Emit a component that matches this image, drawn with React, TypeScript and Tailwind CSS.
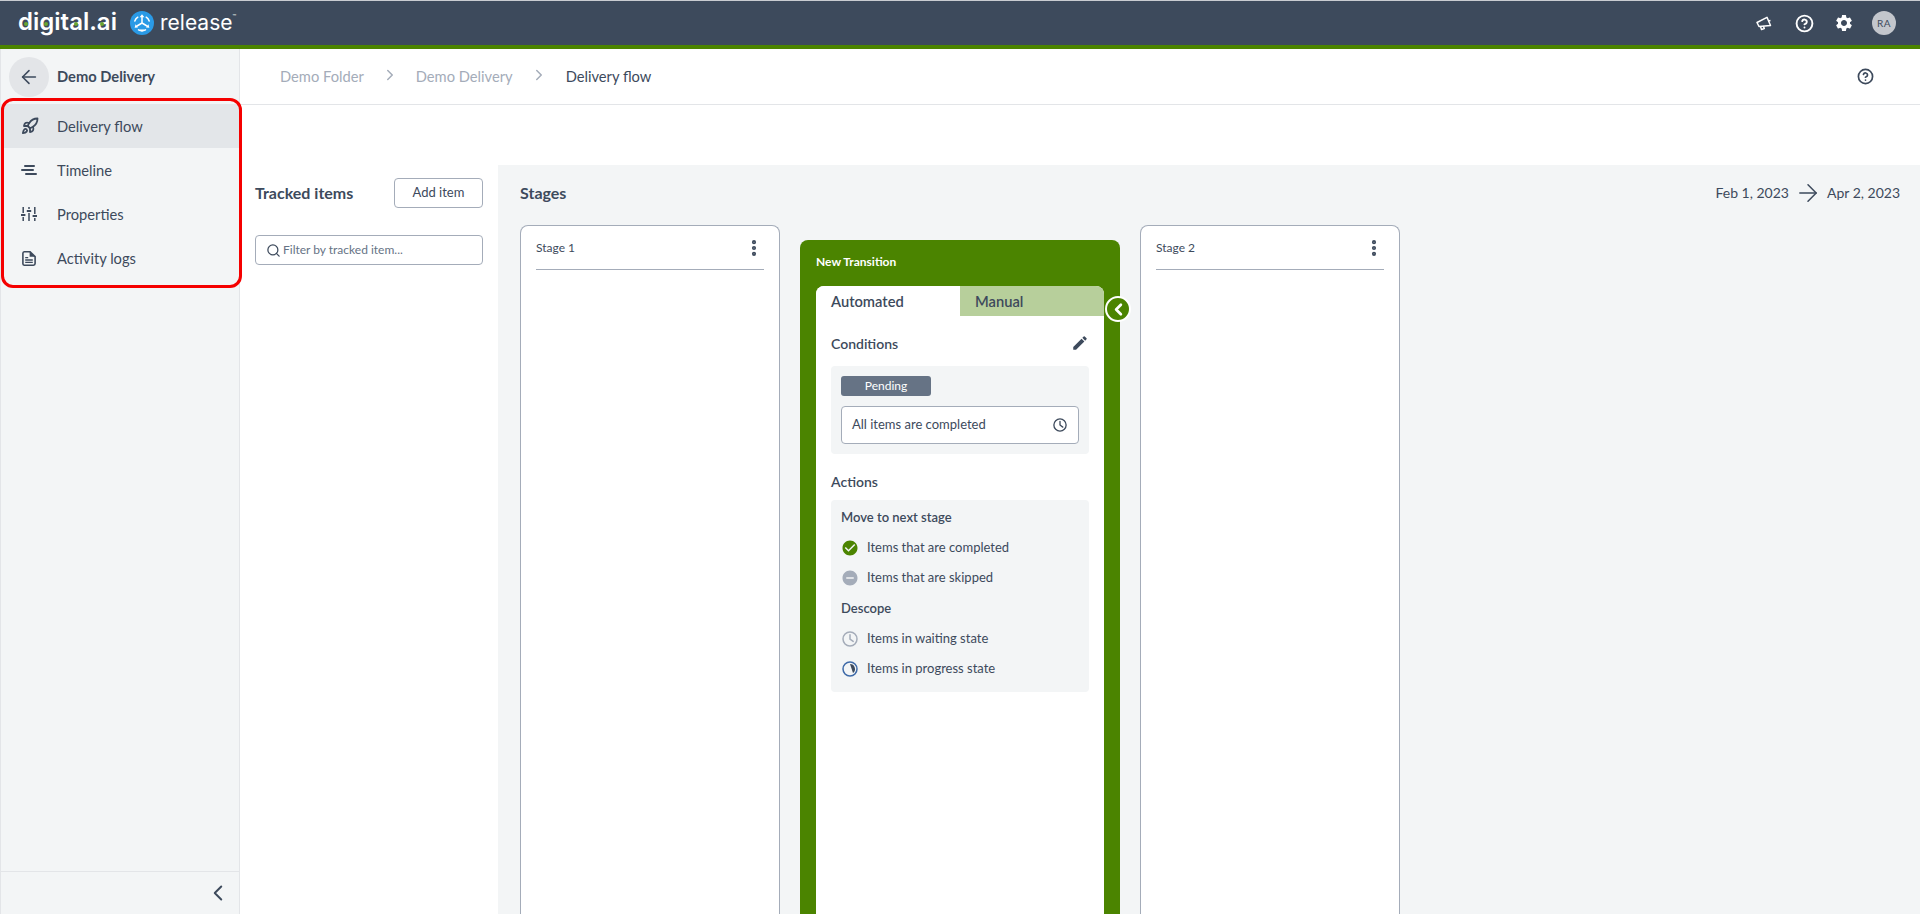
import { ArrowLeft, ArrowRight, ChevronLeft, ChevronRight, CircleHelp, EllipsisVertical, Rocket, Search } from 'lucide-react'
import { MdEdit, MdCheckCircle, MdRemoveCircle, MdSettings } from 'react-icons/md'

const font = { fontFamily: 'Lato, "Open Sans", sans-serif' }
const logoFont = { fontFamily: 'Inter, "Open Sans", sans-serif' }

function ReleaseLogo() {
    return (
        <svg width="24" height="24" viewBox="0 0 24 24">
            <circle cx="12" cy="12" r="12" fill="#2a9ae6" />
            <g fill="none" stroke="#fff" strokeWidth="1.5" strokeLinecap="round">
                <path d="M12 6v6M12 12l-5 3M12 12l5 3" />
                <path d="M4.8 10a7.5 7.5 0 0 1 3-3.8M19.2 10a7.5 7.5 0 0 0-3-3.8M8.5 18.8a7.5 7.5 0 0 0 7 0" />
            </g>
            <path d="M12 3.2l2.4 3h-4.8zM4.6 16.8l1-3.6 2.4 3.2zM19.4 16.8l-1-3.6-2.4 3.2zM12 21l-2-2.4h4z" fill="#fff" />
        </svg>
    )
}

function TimelineIcon() {
    return (
        <svg width="16" height="10" viewBox="0 0 16 10" fill="#3d4a5c">
            <rect x="3" y="0" width="11" height="2" rx="1" />
            <rect x="0" y="4" width="13" height="2" rx="1" />
            <rect x="4" y="8" width="12" height="2" rx="1" />
        </svg>
    )
}

function SlidersIcon() {
    return (
        <svg width="16" height="14" viewBox="0 0 16 14" fill="none" stroke="#3d4a5c" strokeWidth="1.5">
            <path d="M2.2 0v6M2.2 10v4M8 0v2M8 6v8M13.8 0v7M13.8 11v3" />
            <path d="M0 8h4.4M5.8 4h4.4M11.6 9h4.4" strokeWidth="2" />
        </svg>
    )
}

function DocIcon() {
    return (
        <svg width="14" height="15" viewBox="0 0 14 15">
            <path d="M2.2.8h5.9l5 4.8v7a1.6 1.6 0 0 1-1.6 1.6H2.2A1.6 1.6 0 0 1 .9 12.6V2.2A1.5 1.5 0 0 1 2.2.8z" fill="none" stroke="#3d4a5c" strokeWidth="1.6" />
            <path d="M7.6 1v4.8h5.4z" fill="#3d4a5c" />
            <path d="M3.2 6.6h3M3.2 9h7.6M3.2 11.4h7.6" stroke="#3d4a5c" strokeWidth="1.4" />
        </svg>
    )
}

function MegaphoneIcon() {
    return (
        <svg width="16" height="15" viewBox="0 0 16 15" fill="none" stroke="#fff" strokeWidth="1.5" strokeLinejoin="round">
            <path d="M1 6.5l10-5.2 3.5 8.2L3 10.5z" />
            <path d="M4.5 10.5l1 3 2.8-1-1-2.6" />
            <path d="M12 5l2.5-.5" />
        </svg>
    )
}

function ClockIcon({ color, size = 14 }: { color: string; size?: number }) {
    return (
        <svg width={size} height={size} viewBox="0 0 16 16" fill="none" stroke={color} strokeWidth="1.5">
            <circle cx="8" cy="8" r="7" />
            <path d="M8 3.8V8l3.2 2.4" strokeLinecap="round" />
        </svg>
    )
}

function ProgressIcon() {
    return (
        <svg width="16" height="16" viewBox="0 0 16 16">
            <circle cx="8" cy="8" r="7" fill="none" stroke="#3e6aa8" strokeWidth="1.5" />
            <path d="M8 3a5 5 0 0 1 3 9z" fill="#3d4a5c" />
        </svg>
    )
}

const NAV_ITEMS = [
    { label: 'Delivery flow', icon: <Rocket className="w-[18px] h-[18px] text-[#3d4a5c]" strokeWidth={2.4} />, active: true },
    { label: 'Timeline', icon: <TimelineIcon />, active: false },
    { label: 'Properties', icon: <SlidersIcon />, active: false },
    { label: 'Activity logs', icon: <span className="ml-[1px] flex"><DocIcon /></span>, active: false },
]

const LOGO_DOTS = ['left-[6px]', 'left-[26px]', 'left-[56px]', 'left-[82px]']

function StageCard({ title }: { title: string }) {
    return (
        <div className="w-[260px] shrink-0 bg-white border border-[#a4acb9] border-b-0 rounded-t-lg px-[15px] mt-[1px]">
            <div className="h-[44px] flex items-center justify-between border-b border-[#a4acb9]">
                <span className="text-[12px] text-[#3d4a5c]">{title}</span>
                <EllipsisVertical className="w-[20px] h-[20px] text-[#3d4a5c]" strokeWidth={3} />
            </div>
        </div>
    )
}

function ActionRow({ icon, text }: { icon: React.ReactNode; text: string }) {
    return (
        <div className="h-[30px] flex items-center">
            <span className="w-[16px] h-[16px] flex items-center justify-center ml-[1px] mr-[9px]">{icon}</span>
            <span className="text-[13px] text-[#3d4a5c]">{text}</span>
        </div>
    )
}

export default function App() {
    return (
        <div className="relative h-screen flex flex-col overflow-hidden bg-white" style={font}>
            <header className="h-[49px] shrink-0 flex items-center justify-between bg-[#3d4a5c] border-t border-[#c9ccd1] border-b-[4px] border-b-[#4b8400] pl-[18px] pr-[24px]">
                <div className="flex items-center" style={logoFont}>
                    <span className="relative w-[112px] -mt-[3px] text-[24px] leading-none text-white font-semibold">
                        digital.ai
                        {LOGO_DOTS.map((pos) => (
                            <span key={pos} className={`absolute ${pos} top-[12px] w-[4px] h-[4px] rounded-full bg-[#6aa52f]`} />
                        ))}
                    </span>
                    <ReleaseLogo />
                    <span className="ml-[6px] text-[21px] leading-none text-white -mt-[2px]">release</span>
                    <span className="text-[6px] leading-none text-white self-start mt-[3px]">™</span>
                </div>
                <div className="flex items-center">
                    <span className="w-[40px] flex justify-center"><MegaphoneIcon /></span>
                    <span className="w-[40px] flex justify-center"><CircleHelp className="w-[19px] h-[19px] text-white" strokeWidth={2.4} /></span>
                    <span className="w-[40px] flex justify-center"><MdSettings className="w-[20px] h-[20px] text-white" /></span>
                    <div className="w-[24px] h-[24px] rounded-full bg-[#c3c6cc] ml-[8px] flex items-center justify-center text-[10px] tracking-[0.5px] text-[#3d4a5c]">RA</div>
                </div>
            </header>

            <div className="flex-1 flex min-h-0">
                <aside className="w-[240px] shrink-0 flex flex-col bg-[#f3f5f6] border-x border-[#e3e5e8]">
                    <div className="h-[55px] flex items-center pl-[8px]">
                        <div className="w-[40px] h-[40px] rounded-full bg-[#e3e5e8] flex items-center justify-center">
                            <ArrowLeft className="w-[22px] h-[22px] text-[#3d4a5c]" strokeWidth={1.7} />
                        </div>
                        <span className="ml-[8px] text-[14.7px] font-bold text-[#3d4a5c]">Demo Delivery</span>
                    </div>
                    <nav className="flex flex-col">
                        {NAV_ITEMS.map((item) => (
                            <div key={item.label} className={`h-[44px] flex items-center ${item.active ? 'bg-[#e3e6e9]' : ''}`}>
                                <span className="w-[56px] pl-[20px] flex items-center">{item.icon}</span>
                                <span className="text-[14.7px] text-[#3d4a5c]">{item.label}</span>
                            </div>
                        ))}
                    </nav>
                    <div className="mt-auto h-[43px] border-t border-[#e3e5e8] flex items-center justify-end pr-[8px]">
                        <ChevronLeft className="w-[26px] h-[26px] text-[#3d4a5c]" strokeWidth={1.8} />
                    </div>
                </aside>

                <main className="flex-1 min-w-0 flex flex-col">
                    <div className="h-[56px] shrink-0 flex items-center justify-between border-b border-[#e3e5e8] pl-[40px] pr-[46px] text-[14.7px]">
                        <div className="flex items-center">
                            <span className="text-[#a4acb9]">Demo Folder</span>
                            <ChevronRight className="w-[18px] h-[18px] text-[#a4acb9] ml-[17px] mr-[17px] -mt-[2px]" />
                            <span className="text-[#a4acb9]">Demo Delivery</span>
                            <ChevronRight className="w-[18px] h-[18px] text-[#a4acb9] ml-[17px] mr-[18px] -mt-[2px]" />
                            <span className="text-[#3d4a5c]">Delivery flow</span>
                        </div>
                        <CircleHelp className="w-[17px] h-[17px] text-[#3d4a5c]" strokeWidth={2.4} />
                    </div>

                    <div className="flex-1 min-h-0 flex mt-[60px]">
                        <section className="w-[258px] shrink-0 px-[15px] pt-[13px]">
                            <div className="flex items-center justify-between">
                                <span className="text-[16px] font-bold text-[#3d4a5c]">Tracked items</span>
                                <button className="w-[89px] h-[30px] border border-[#a4acb9] rounded text-[13px] text-[#3d4a5c]">Add item</button>
                            </div>
                            <div className="mt-[27px] h-[30px] border border-[#a4acb9] rounded flex items-center pl-[10px] text-[12px] text-[#667385]">
                                <Search className="w-[15px] h-[15px] text-[#3d4a5c] mr-[2px]" strokeWidth={2} />
                                Filter by tracked item...
                            </div>
                        </section>

                        <section className="flex-1 min-w-0 flex flex-col bg-[#f3f5f6] pl-[22px] pr-[20px]">
                            <div className="h-[59px] shrink-0 pt-[14px] flex justify-between items-start">
                                <span className="text-[16px] font-bold text-[#3d4a5c] leading-[28px]">Stages</span>
                                <div className="flex items-center text-[14px] text-[#3d4a5c] leading-[28px]">
                                    Feb 1, 2023
                                    <ArrowRight className="w-[28px] h-[28px] mx-[5px]" strokeWidth={1.3} />
                                    Apr 2, 2023
                                </div>
                            </div>
                            <div className="flex-1 min-h-0 flex items-stretch">
                                <StageCard title="Stage 1" />

                                <div className="relative w-[320px] shrink-0 ml-[20px] mr-[20px] mt-[16px] bg-[#4b8400] rounded-t-lg px-[16px]">
                                    <div className="h-[46px] pt-[13px] text-[12px] font-bold text-white">New Transition</div>
                                    <div className="h-full bg-white rounded-t-lg">
                                        <div className="flex h-[30px] text-[14.7px] font-semibold text-[#3d4a5c]">
                                            <div className="w-[144px] pl-[15px] flex items-center rounded-t-lg bg-white">Automated</div>
                                            <div className="w-[144px] pl-[15px] flex items-center bg-[#b7cf9b] rounded-tr-lg">Manual</div>
                                        </div>
                                        <div className="px-[15px]">
                                            <div className="h-[50px] flex items-center justify-between pt-[4px]">
                                                <span className="text-[14px] font-semibold text-[#3d4a5c]">Conditions</span>
                                                <MdEdit className="w-[18px] h-[18px] text-[#3d4a5c]" />
                                            </div>
                                            <div className="bg-[#f3f5f6] rounded px-[10px] pt-[10px] h-[88px]">
                                                <div className="w-[90px] h-[20px] rounded-[3px] bg-[#667385] text-white text-[12px] flex items-center justify-center">Pending</div>
                                                <div className="mt-[10px] h-[38px] bg-white border border-[#a4acb9] rounded flex items-center justify-between pl-[10px] pr-[11px] text-[13px] text-[#3d4a5c]">
                                                    All items are completed
                                                    <ClockIcon color="#3d4a5c" />
                                                </div>
                                            </div>
                                            <div className="h-[46px] flex items-center pt-[8px] text-[14px] font-semibold text-[#3d4a5c]">Actions</div>
                                            <div className="bg-[#f3f5f6] rounded px-[10px] h-[192px]">
                                                <div className="h-[33px] pt-[2px] flex items-center text-[13px] font-semibold text-[#3d4a5c]">Move to next stage</div>
                                                <ActionRow icon={<MdCheckCircle className="w-[18px] h-[18px] text-[#4b8400] shrink-0" />} text="Items that are completed" />
                                                <ActionRow icon={<MdRemoveCircle className="w-[18px] h-[18px] text-[#a4acb9] shrink-0" />} text="Items that are skipped" />
                                                <div className="h-[31px] flex items-center text-[13px] font-semibold text-[#3d4a5c]">Descope</div>
                                                <ActionRow icon={<ClockIcon color="#a4acb9" size={16} />} text="Items in waiting state" />
                                                <ActionRow icon={<ProgressIcon />} text="Items in progress state" />
                                            </div>
                                        </div>
                                    </div>
                                    <div className="absolute right-[-11px] top-[56px] w-[26px] h-[26px] rounded-full bg-[#4b8400] border-2 border-white flex items-center justify-center">
                                        <ChevronLeft className="w-[19px] h-[19px] text-white" strokeWidth={3.4} />
                                    </div>
                                </div>

                                <StageCard title="Stage 2" />
                            </div>
                        </section>
                    </div>
                </main>
            </div>

            <div className="absolute left-[1px] top-[98px] w-[241px] h-[190px] border-[3px] border-[#f50000] rounded-[12px] pointer-events-none" />
        </div>
    )
}
